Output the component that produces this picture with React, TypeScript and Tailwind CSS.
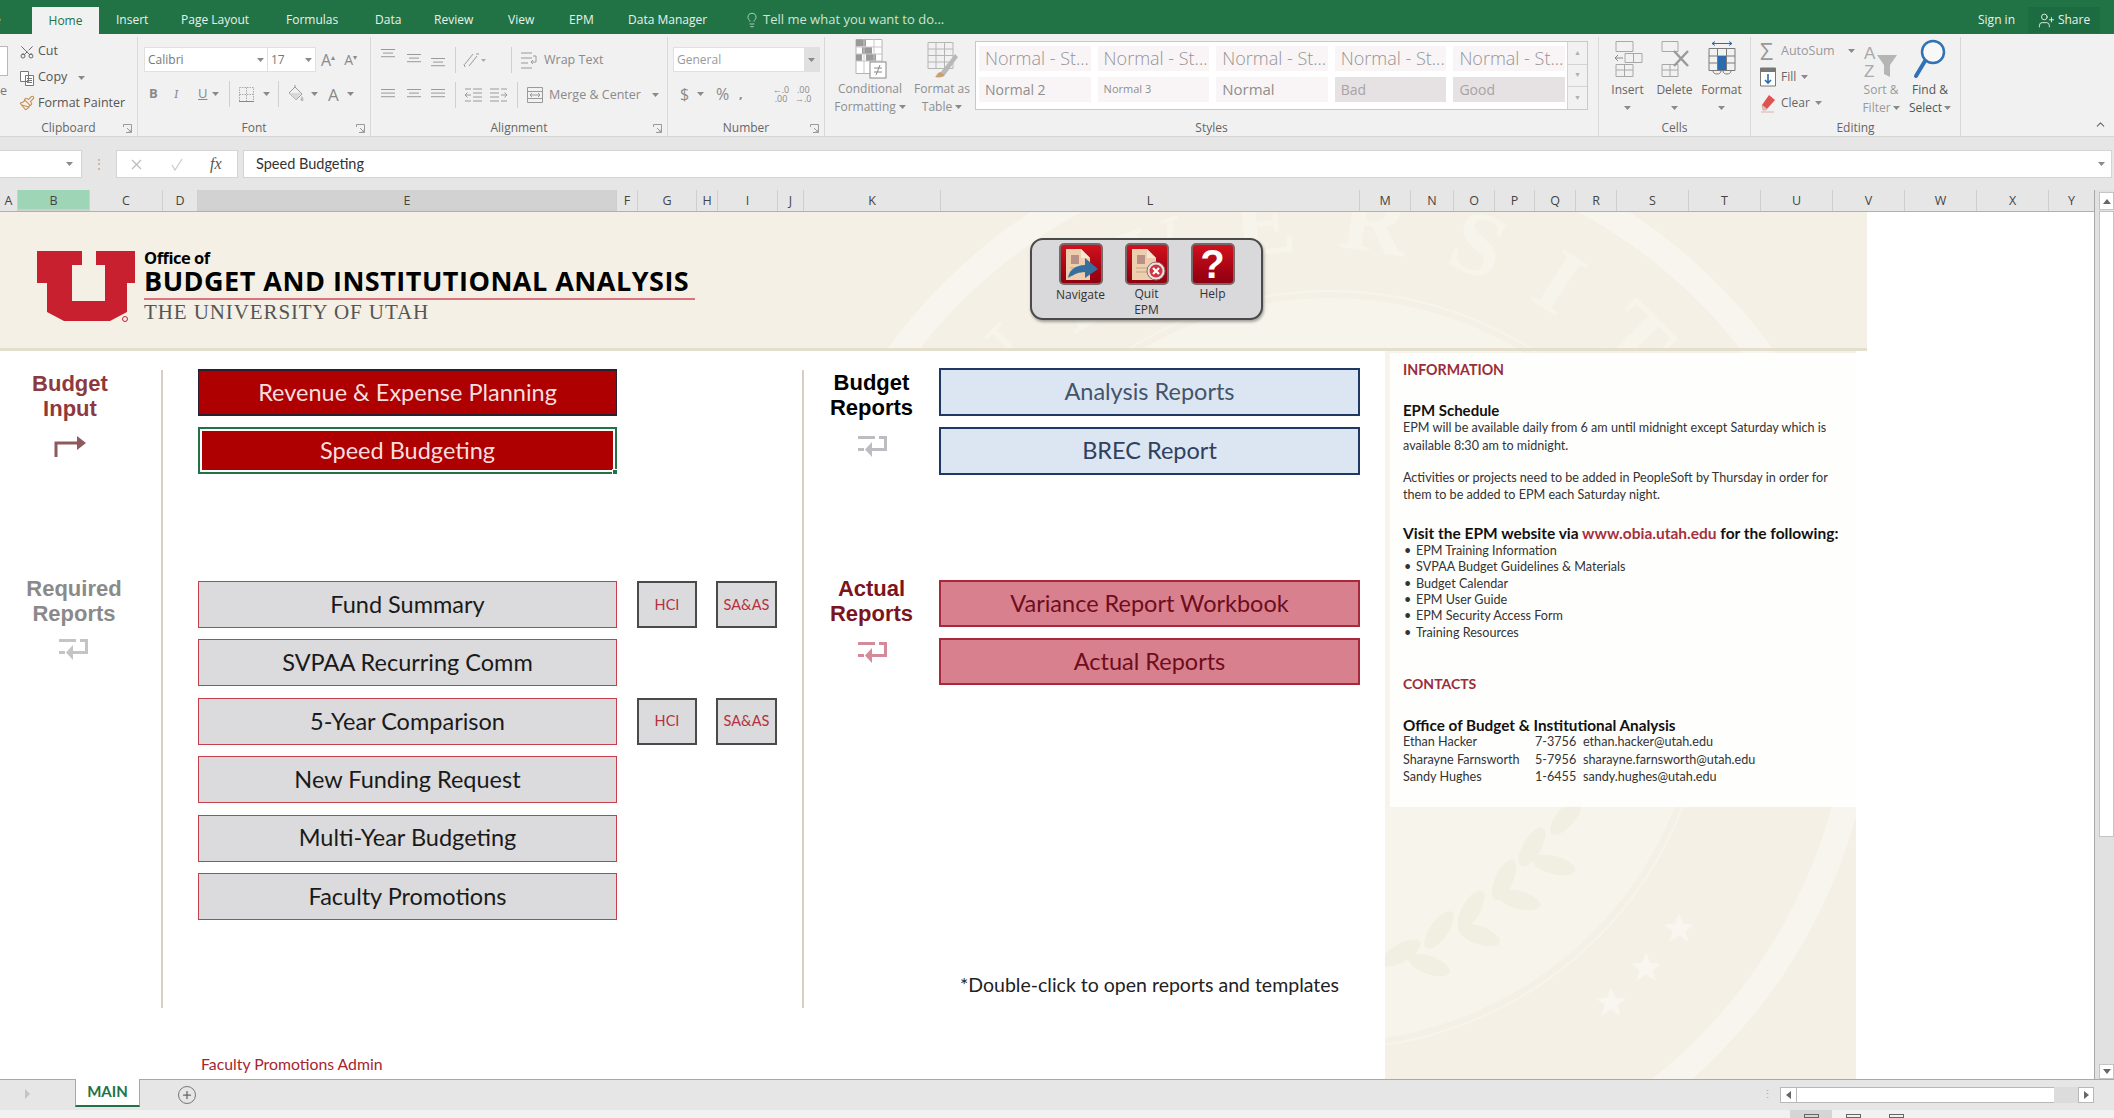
import React from "react";
import { ChevronUp, Lightbulb, Paintbrush, Plus, Scissors, UserPlus } from "lucide-react";

const calibri = "font-['Lato',sans-serif]";

// column letters along the top of the sheet
const columns = [
  { id: "A", w: "w-[18px]" },
  { id: "B", w: "w-[72px]", cls: "bg-[#9fd5b7] border-b-2 border-[#217346]" },
  { id: "C", w: "w-[73px]" },
  { id: "D", w: "w-[35px]" },
  { id: "E", w: "w-[419px]", cls: "bg-[#d2d2d2] border-b-2 border-[#217346]" },
  { id: "F", w: "w-[21px]" },
  { id: "G", w: "w-[59px]" },
  { id: "H", w: "w-[21px]" },
  { id: "I", w: "w-[60px]" },
  { id: "J", w: "w-[26px]" },
  { id: "K", w: "w-[137px]" },
  { id: "L", w: "w-[419px]" },
  { id: "M", w: "w-[51px]" },
  { id: "N", w: "w-[43px]" },
  { id: "O", w: "w-[41px]" },
  { id: "P", w: "w-[40px]" },
  { id: "Q", w: "w-[41px]" },
  { id: "R", w: "w-[41px]" },
  { id: "S", w: "w-[72px]" },
  { id: "T", w: "w-[72px]" },
  { id: "U", w: "w-[72px]" },
  { id: "V", w: "w-[72px]" },
  { id: "W", w: "w-[72px]" },
  { id: "X", w: "w-[72px]" },
  { id: "Y", w: "w-[46px]" },
];

const tabs = [
  { label: "Insert", w: "w-[65px]" },
  { label: "Page Layout", w: "w-[105px]" },
  { label: "Formulas", w: "w-[89px]" },
  { label: "Data", w: "w-[59px]" },
  { label: "Review", w: "w-[74px]" },
  { label: "View", w: "w-[61px]" },
  { label: "EPM", w: "w-[59px]" },
  { label: "Data Manager", w: "w-[116px]" },
];

const requiredReports = [
  { label: "Fund Summary", extras: true },
  { label: "SVPAA Recurring Comm" },
  { label: "5-Year Comparison", extras: true },
  { label: "New Funding Request" },
  { label: "Multi-Year Budgeting" },
  { label: "Faculty Promotions" },
];

const epmLinks = [
  "EPM Training Information",
  "SVPAA Budget Guidelines & Materials",
  "Budget Calendar",
  "EPM User Guide",
  "EPM Security Access Form",
  "Training Resources",
];

const contacts = [
  { name: "Ethan Hacker", phone: "7-3756", email: "ethan.hacker@utah.edu" },
  { name: "Sharayne Farnsworth", phone: "5-7956", email: "sharayne.farnsworth@utah.edu" },
  { name: "Sandy Hughes", phone: "1-6455", email: "sandy.hughes@utah.edu" },
];

const Caret = ({ className = "" }: { className?: string }) => (
  <svg width="7" height="4" viewBox="0 0 7 4" className={`shrink-0 ${className}`}>
    <path d="M0 0h7L3.5 4z" fill="#8a8a8a" />
  </svg>
);

const Lines = ({ widths, className = "" }: { widths: number[]; className?: string }) => (
  <svg width="16" height="16" viewBox="0 0 16 16" className={className}>
    {widths.map((w, i) => (
      <rect key={i} x={(16 - w) / 2} y={2 + i * 3.6} width={w} height="1" fill="#9a9a9a" />
    ))}
  </svg>
);

const VSep = () => <div className="w-px h-[26px] bg-[#d0d0d0] shrink-0" />;

const Group = ({
  label,
  w,
  launcher,
  children,
}: {
  label: string;
  w: string;
  launcher?: boolean;
  children: React.ReactNode;
}) => (
  <div className={`${w} h-[99px] mt-[3px] shrink-0 flex flex-col border-r border-[#d8d8d8]`}>
    <div className="flex-1 min-h-0">{children}</div>
    <div className="h-[20px] pt-[3px] flex items-center relative text-[12px] text-[#666]">
      <span className="flex-1 text-center">{label}</span>
      {launcher && (
        <svg width="9" height="9" viewBox="0 0 9 9" className="absolute right-[5px] top-[8px]">
          <path d="M.5 3V.5H8.500V8.500H3M4 4l4 4M8 5.500V8H5.500" fill="none" stroke="#9a9a9a" />
        </svg>
      )}
    </div>
  </div>
);

const CellsIcon = ({ kind }: { kind: "insert" | "delete" | "format" }) => (
  <svg width="34" height="38" viewBox="0 0 34 38">
    {kind === "format" ? (
      <g fill="none" stroke="#7a7a7a">
        <path d="M4 8.500h26v22H4zM4 16h26M4 23h26M12.500 8.500v22M21.500 8.500v22" />
        <rect x="13" y="16" width="8" height="14" fill="#2b6cb0" stroke="none" />
        <path d="M8 31c0 4 8 4 8 0M18 31c0 4 8 4 8 0" />
        <path d="M7 3.500h20M7 3.500l3-2M7 3.500l3 2M27 3.500l-3-2M27 3.500l-3 2" stroke="#2b6cb0" />
      </g>
    ) : kind === "insert" ? (
      <g fill="none" stroke="#a8a8a8">
        <path d="M5 1.500h17v10H5zM5 24.500h17v12H5zM13.500 24.500v12M5 30h17M14 13.500h17v9H14zM22.500 13.500v9" />
        <path d="M4 18h8M4 18l3-3M4 18l3 3" stroke="#8a8a8a" />
      </g>
    ) : (
      <g fill="none" stroke="#a8a8a8">
        <path d="M4 1.500h16v10H4zM4 24.500h16v12H4zM12 24.500v12M4 30h16" />
        <path d="M16 11l14 15M30 11L16 26" stroke="#9a9a9a" strokeWidth="2.500" />
      </g>
    )}
  </svg>
);

const StyleCell = ({ text, cls }: { text: string; cls: string }) => (
  <div className={`h-[25px] flex items-center pl-[6px] overflow-hidden whitespace-nowrap ${cls}`}>{text}</div>
);

function Ribbon() {
  return (
    <div className="h-[103px] bg-[#f1f1f1] flex border-b border-[#d6d6d6] shrink-0 relative">
      <Group label="Clipboard" w="w-[138px]" launcher>
        <div className="flex h-full text-[12.500px] text-[#555]">
          <div className="w-[19px] relative overflow-hidden">
            <div className="w-[8px] h-[30px] mt-[9px] border border-l-0 border-[#b8b8b8] bg-white" />
            <span className="block mt-[6px] text-[#777]">e</span>
          </div>
          <div className="flex flex-col pt-[2px]">
            <div className="h-[26px] flex items-center gap-[3px]">
              <Scissors size={16} strokeWidth={1.3} className="text-[#555] -rotate-90" />
              <span>Cut</span>
            </div>
            <div className="h-[27px] flex items-center gap-[3px]">
              <svg width="16" height="16" viewBox="0 0 16 16" fill="#fff" stroke="#777">
                <path d="M1.500 1.500h8v10h-8zM6.500 5.500h8v10h-8zM8 8.500h5M8 10.500h5M8 12.500h5" />
              </svg>
              <span>Copy</span>
              <Caret className="ml-[8px]" />
            </div>
            <div className="h-[26px] flex items-center gap-[3px]">
              <Paintbrush size={16} strokeWidth={1.6} className="text-[#c98f4b]" />
              <span>Format Painter</span>
            </div>
          </div>
        </div>
      </Group>

      <Group label="Font" w="w-[233px]" launcher>
        <div className="pl-[6px] pt-[10px] text-[12px] text-[#8a8a8a]">
          <div className="flex items-center">
            <div className="w-[124px] h-[25px] bg-white border border-[#e0e0e0] flex items-center justify-between px-[3px] text-[#777]">
              Calibri <Caret />
            </div>
            <div className="w-[48px] h-[25px] bg-white border border-l-0 border-[#e0e0e0] flex items-center justify-between px-[3px] text-[#777]">
              17 <Caret />
            </div>
            <span className="ml-[5px] text-[16px] leading-none">A</span>
            <span className="text-[8px] self-start mt-[4px]">▴</span>
            <span className="ml-[9px] text-[14px] leading-none">A</span>
            <span className="text-[8px] self-start mt-[4px]">▾</span>
          </div>
          <div className="flex items-center h-[26px] mt-[9px] pl-[5px]">
            <b className="w-[25px] text-[13px]">B</b>
            <i className="w-[24px] text-[13px] font-serif">I</i>
            <u className="w-[14px] text-[13px]">U</u>
            <Caret className="mr-[10px]" />
            <VSep />
            <svg width="17" height="17" viewBox="0 0 17 17" className="ml-[8px]">
              <path d="M1.500 1.500h14v14h-14zM8.500 1.500v14M1.500 8.500h14" fill="none" stroke="#aaa" strokeDasharray="1.500 1" />
              <path d="M1 15.500h15" stroke="#888" />
            </svg>
            <Caret className="ml-[8px] mr-[8px]" />
            <VSep />
            <svg width="18" height="19" viewBox="0 0 18 19" className="ml-[8px]">
              <path d="M8 2l7 7-6 6-7-7zM8 2V0" fill="none" stroke="#999" />
              <path d="M2 8h12l-5 7z" fill="#d8d8d8" />
              <path d="M15 11c2 3 2 5 0 5s-2-2 0-5z" fill="#bbb" />
            </svg>
            <Caret className="ml-[6px] mr-[10px]" />
            <span className="text-[17px] leading-none">A</span>
            <Caret className="ml-[8px]" />
          </div>
        </div>
      </Group>

      <Group label="Alignment" w="w-[297px]" launcher>
        <div className="pl-[9px] pt-[8px] text-[12.500px] text-[#8a8a8a]">
          <div className="flex items-center h-[30px]">
            <Lines widths={[14, 10, 14]} className="mr-[10px] -mt-[10px]" />
            <Lines widths={[14, 10, 14]} className="mr-[8px]" />
            <Lines widths={[14, 10, 14]} className="mr-[9px] mt-[8px]" />
            <VSep />
            <svg width="24" height="18" viewBox="0 0 24 18" className="ml-[6px] mr-[25px]">
              <path d="M3 13L11 3M7 15l8-10M3 16l-1-3M17 3l-3 0" fill="none" stroke="#999" />
              <path d="M19 8h5l-2.500 3z" fill="#aaa" />
            </svg>
            <VSep />
            <svg width="18" height="20" viewBox="0 0 18 20" className="ml-[8px] mr-[6px]" fill="none" stroke="#9a9a9a">
              <path d="M1 3h11M1 8h11M1 13h7M1 18h11M13 6h3v6h-5M13 10l-2 2 2 2" />
            </svg>
            <span>Wrap Text</span>
          </div>
          <div className="flex items-center h-[26px] mt-[7px]">
            <Lines widths={[14, 14, 14]} className="mr-[10px]" />
            <Lines widths={[14, 10, 14]} className="mr-[8px]" />
            <Lines widths={[14, 14, 14]} className="mr-[9px]" />
            <VSep />
            <svg width="44" height="16" viewBox="0 0 44 16" className="ml-[8px] mr-[9px]" fill="none" stroke="#9a9a9a">
              <path d="M9 2h9M9 6h9M9 10h9M9 14h9M1 2h6M1 14h6M7 8H1M3.500 5.500L1 8l2.500 2.500M26 2h9M26 6h9M26 10h9M26 14h9M37 2h6M37 14h6M37 8h6M40.500 5.500L43 8l-2.500 2.500" />
            </svg>
            <VSep />
            <svg width="18" height="18" viewBox="0 0 18 18" className="ml-[8px] mr-[5px]" fill="none" stroke="#9a9a9a">
              <path d="M1.500 1.500h15v15h-15zM1.500 5.500h15M1.500 12.500h15M4 9h10M4 9l2-2M4 9l2 2M14 9l-2-2M14 9l-2 2" />
            </svg>
            <span>Merge &amp; Center</span>
            <Caret className="ml-[11px]" />
          </div>
        </div>
      </Group>

      <Group label="Number" w="w-[157px]" launcher>
        <div className="pl-[5px] pt-[10px] text-[12px] text-[#8a8a8a]">
          <div className="w-[147px] h-[25px] bg-white border border-[#e0e0e0] flex items-center justify-between">
            <span className="pl-[3px] text-[#999]">General</span>
            <div className="h-full w-[15px] bg-[#e0e0e0] flex items-center justify-center">
              <Caret />
            </div>
          </div>
          <div className="flex items-center h-[26px] mt-[9px] pl-[7px]">
            <span className="text-[16px] w-[17px]">$</span>
            <Caret className="mr-[12px]" />
            <span className="text-[16px] w-[23px]">%</span>
            <b className="w-[28px] text-[13px]">,</b>
            <span className="text-[9px] leading-[9px] w-[28px] text-center">
              ←.0
              <br />
              .00
            </span>
            <span className="text-[9px] leading-[9px] text-center">
              .00
              <br />
              →.0
            </span>
          </div>
        </div>
      </Group>

      <Group label="Styles" w="w-[774px]">
        <div className="flex pt-[1px] text-[12px] text-[#8e8e8e]">
          <div className="w-[88px] flex flex-col items-center pl-[2px] leading-[18px]">
            <svg width="36" height="42" viewBox="0 0 36 42">
              <path d="M4 1.500h26v34H4z" fill="#fff" stroke="#b5b5b5" />
              <path d="M4 1.500h10v7H4zM10 9h10v7H10zM4 16h6v7H4zM14 16h10v7H14z" fill="#9a9a9a" />
              <path d="M4 9h26M4 16h26M4 23h26M12 1v34M22 1v34" stroke="#c8c8c8" fill="none" />
              <rect x="18" y="24" width="16" height="16" fill="#fff" stroke="#888" />
              <path d="M22 30h8M22 34h8M28 27l-4 10" stroke="#888" />
            </svg>
            <span>Conditional</span>
            <span className="flex items-center gap-[3px]">
              Formatting <Caret />
            </span>
          </div>
          <div className="w-[64px] flex flex-col items-center -ml-[3px] leading-[18px] shrink-0">
            <svg width="36" height="42" viewBox="0 0 36 42">
              <path d="M4 4.500h25v26H4zM4 11h25M4 17.500h25M4 24h25M12 4.500v26M20.500 4.500v26" fill="none" stroke="#b5b5b5" />
              <path d="M31 16L17 34l4 3 13-18z" fill="#b8b8b8" />
              <path d="M17 34c-4 0-4 4-6 5 4 1 9 0 10-2z" fill="#c9a170" />
            </svg>
            <span className="whitespace-nowrap">Format as</span>
            <span className="flex items-center gap-[3px]">
              Table <Caret />
            </span>
          </div>
          <div className="ml-[1px] mt-[3px] w-[613px] h-[69px] bg-white border border-[#c8c8c8] flex shrink-0">
            <div className="flex-1 grid grid-cols-5 gap-x-[7px] gap-y-[6px] pl-[3px] pr-[2px] pt-[4px] content-start">
              {[0, 1, 2, 3, 4].map((i) => (
                <StyleCell key={i} text="Normal - St..." cls="bg-[#f9f5f6] text-[18px] font-light text-[#949494]" />
              ))}
              <StyleCell text="Normal 2" cls="bg-[#f9f5f6] text-[14px]" />
              <StyleCell text="Normal 3" cls="bg-[#f9f5f6] text-[11px]" />
              <StyleCell text="Normal" cls="bg-[#f9f5f6] text-[15px]" />
              <StyleCell text="Bad" cls="bg-[#e6e1e3] text-[14px] text-[#a8a3a5]" />
              <StyleCell text="Good" cls="bg-[#e6e1e3] text-[14px] text-[#a8a3a5]" />
            </div>
            <div className="w-[20px] bg-[#f1f1f1] border-l border-[#d4d4d4] flex flex-col text-[7px] text-[#b0b0b0] items-center">
              <span className="flex-1 flex items-center">▲</span>
              <span className="flex-1 flex items-center border-y border-[#d4d4d4] w-full justify-center">▼</span>
              <span className="flex-1 flex items-center">▼</span>
            </div>
          </div>
        </div>
      </Group>

      <Group label="Cells" w="w-[152px]">
        <div className="flex justify-center pt-[3px] text-[12px] text-[#666] leading-[18px]">
          {(["Insert", "Delete", "Format"] as const).map((c) => (
            <div key={c} className="w-[47px] flex flex-col items-center">
              <CellsIcon kind={c.toLowerCase() as "insert" | "delete" | "format"} />
              <span className="mt-[3px]">{c}</span>
              <Caret className="mt-[7px]" />
            </div>
          ))}
        </div>
      </Group>

      <Group label="Editing" w="w-[210px]">
        <div className="flex text-[12px] leading-[18px]">
          <div className="w-[105px] pl-[9px] pt-[1px] flex flex-col text-[#666]">
            <div className="h-[26px] flex items-center gap-[3px] text-[#999]">
              <span className="text-[23px] w-[18px] leading-none">Σ</span>
              <span className="text-[12.500px]">AutoSum</span>
              <Caret className="ml-[10px]" />
            </div>
            <div className="h-[26px] flex items-center gap-[5px]">
              <svg width="16" height="20" viewBox="0 0 16 20">
                <path d="M.5 1h15v18H.5z" fill="#fff" stroke="#777" />
                <path d="M.5 1h15v4H.5z" fill="#777" />
                <path d="M8 7v9M5 13l3 3 3-3" stroke="#2b6cb0" strokeWidth="1.600" fill="none" />
              </svg>
              <span>Fill</span>
              <Caret />
            </div>
            <div className="h-[26px] flex items-center gap-[5px]">
              <svg width="16" height="20" viewBox="0 0 16 20">
                <path d="M9 2l6 5-8 9-5-4z" fill="#e0524f" />
                <path d="M2 12l5 4-1 1H3zM1 19h13" fill="#e8c6c6" stroke="#c88" strokeWidth=".6" />
              </svg>
              <span>Clear</span>
              <Caret />
            </div>
          </div>
          <div className="w-[50px] flex flex-col items-center pt-[6px] text-[#999]">
            <svg width="36" height="38" viewBox="0 0 36 38" className="-ml-[2px]">
              <text x="2" y="16" fontSize="17" fill="#aaa" fontFamily="Liberation Sans">A</text>
              <text x="2" y="34" fontSize="17" fill="#aaa" fontFamily="Liberation Sans">Z</text>
              <path d="M15 12h20l-7 10v12l-6-3v-9z" fill="#b5b5b5" />
            </svg>
            <span className="whitespace-nowrap">Sort &amp;</span>
            <span className="flex items-center gap-[2px]">
              Filter <Caret />
            </span>
          </div>
          <div className="w-[48px] flex flex-col items-center text-[#555]">
            <svg width="34" height="44" viewBox="0 0 34 44">
              <circle cx="20" cy="15" r="11" fill="#fff" fillOpacity=".5" stroke="#2f72b5" strokeWidth="2.500" />
              <path d="M12 24L3 39" stroke="#2f72b5" strokeWidth="4" strokeLinecap="round" />
            </svg>
            <span className="whitespace-nowrap">Find &amp;</span>
            <span className="flex items-center gap-[2px]">
              Select <Caret />
            </span>
          </div>
        </div>
      </Group>

      <ChevronUp size={13} strokeWidth={2} className="absolute right-[7px] bottom-[5px] text-[#666]" />
    </div>
  );
}

function FormulaBar() {
  return (
    <div className="h-[53px] bg-[#e6e6e6] flex items-center pt-[1px] shrink-0 text-[#777]">
      <div className="w-[82px] h-[28px] bg-white border border-l-0 border-[#d4d4d4] flex items-center justify-end pr-[8px]">
        <Caret className="text-[#555]" />
      </div>
      <div className="w-[34px] flex justify-center text-[#aaa] text-[12px] tracking-tight">⋮</div>
      <div className="w-[122px] h-[28px] bg-white border border-[#d4d4d4] flex items-center pl-[13px] text-[#bdbdbd]">
        <svg width="13" height="13" viewBox="0 0 13 13" className="mr-[27px]">
          <path d="M2 2l9 9M11 2l-9 9" stroke="#bbb" strokeWidth="1.200" />
        </svg>
        <svg width="14" height="13" viewBox="0 0 14 13" className="mr-[26px]">
          <path d="M2 7l3 5 7-11" stroke="#ccc" strokeWidth="1.300" fill="none" />
        </svg>
        <i className="font-['Liberation_Serif',serif] text-[16px] text-[#555]">fx</i>
      </div>
      <div className="ml-[5px] w-[1869px] h-[28px] bg-white border border-[#d4d4d4] flex items-center justify-between pl-[12px] pr-[6px]">
        <span className={`${calibri} text-[14.500px] text-[#333]`}>Speed Budgeting</span>
        <Caret />
      </div>
    </div>
  );
}

const SealRings = () => (
  <>
    <circle cx="1330" cy="670" r="372" fill="#f7f4ec" />
    <circle cx="1330" cy="670" r="379" fill="none" stroke="#f7f4ec" strokeWidth="2" />
    <circle cx="1330" cy="670" r="534" fill="none" stroke="#f8f5ee" strokeWidth="26" />
  </>
);

const Star = ({ x, y }: { x: number; y: number }) => (
  <path
    transform={`translate(${x} ${y}) scale(1.050)`}
    d="M0-14l4 10 10 1-8 6 3 10-9-6-9 6 3-10-8-6 10-1z"
    fill="#f9f6f0"
  />
);

const Leaf = ({ x, y, r }: { x: number; y: number; r: number }) => (
  <ellipse cx={x} cy={y} rx="22" ry="9" transform={`rotate(${r} ${x} ${y})`} fill="#f1eee2" />
);

function Logo() {
  return (
    <div className="flex items-start pl-[37px] pt-[39px] relative">
      <svg width="104" height="72" viewBox="37 251 104 72" className="shrink-0">
        <path
          d="M37 251H82V265H72V301H105V265H96V251H135V283H127V312L110 321H64L47 312V283H37Z"
          fill="#c8202f"
        />
        <circle cx="125" cy="319" r="2.500" fill="none" stroke="#c8202f" />
      </svg>
      <div className="ml-[3px] -mt-[2px]">
        <div className="h-[18px] leading-[18px] text-[16.500px] font-bold text-black font-['Open_Sans',sans-serif] tracking-[-0.5px]">
          Office of
        </div>
        <div className="h-[28px] leading-[28px] text-[27px] font-bold text-black font-['Open_Sans',sans-serif] tracking-[0.5px] whitespace-nowrap">
          BUDGET AND INSTITUTIONAL ANALYSIS
        </div>
        <div className="mt-[3px] w-[551px] h-[2px] bg-[#d9747c]" />
        <div className="mt-[2px] h-[20px] leading-[20px] text-[21px] tracking-[0.9px] text-[#555] font-['Liberation_Serif',serif] whitespace-nowrap">
          THE UNIVERSITY OF UTAH
        </div>
      </div>
    </div>
  );
}

const ToolIcon = ({ children }: { children: React.ReactNode }) => (
  <div className="w-[44px] h-[42px] rounded-[5px] border-2 border-[#77696a] bg-gradient-to-b from-[#d2101c] to-[#8f0010] flex items-center justify-center overflow-hidden">
    {children}
  </div>
);

const DocGlyph = () => (
  <>
    <path d="M4 3h15l9 9v22H4z" fill="#edcfb0" />
    <path d="M19 3l9 9h-9z" fill="#f7e6d3" />
    <rect x="9" y="9" width="8" height="9" fill="#b98f86" />
    <path d="M8 22h14M8 26h16" stroke="#c9a182" />
  </>
);

function Toolbar() {
  return (
    <div className="relative mt-[26px] w-[233px] h-[82px] rounded-[13px] bg-[#d9d8da] border-2 border-[#4a4a4a] shadow-[1px_2px_3px_rgba(0,0,0,0.35)] flex justify-center gap-[22px] pt-[3px] text-[12px] text-[#333]">
      <div className="w-[44px] flex flex-col items-center">
        <ToolIcon>
          <svg width="38" height="36" viewBox="0 0 38 36">
            <DocGlyph />
            <path d="M6 32c1-8 8-13 17-13v-7l13 11-13 9v-6c-6 0-10 2-17 6z" fill="#356f9f" />
          </svg>
        </ToolIcon>
        <span className="mt-[1px] whitespace-nowrap leading-[18px]">Navigate</span>
      </div>
      <div className="w-[44px] flex flex-col items-center">
        <ToolIcon>
          <svg width="38" height="36" viewBox="0 0 38 36">
            <DocGlyph />
            <circle cx="28" cy="25" r="9" fill="#e9e4e4" stroke="#8a6a6a" />
            <circle cx="28" cy="25" r="6.500" fill="#d2333f" />
            <path d="M25 22l6 6M31 22l-6 6" stroke="#fff" strokeWidth="2.200" />
          </svg>
        </ToolIcon>
        <span className="leading-[17px]">Quit</span>
        <span className="leading-[15px]">EPM</span>
      </div>
      <div className="w-[44px] flex flex-col items-center">
        <ToolIcon>
          <span className="font-['Liberation_Sans',sans-serif] font-bold text-[40px] leading-none text-white">?</span>
        </ToolIcon>
        <span className="leading-[17px]">Help</span>
      </div>
    </div>
  );
}

function Banner() {
  return (
    <div className="relative w-[1867px] h-[139px] bg-[#f4f0e5] border-b-[3px] border-[#e4dfcd] shrink-0 overflow-hidden">
      <svg viewBox="0 212 1867 139" width="1867" height="139" className="absolute left-0 top-0" aria-hidden="true">
        <SealRings />
        <path id="seal-arc" d="M910 670A420 420 0 0 1 1750 670" fill="none" />
        <text fontSize="92" fontFamily="Liberation Serif" fontWeight="700" fill="#f7f4eb" letterSpacing="40">
          <textPath href="#seal-arc" startOffset="50%" textAnchor="middle">
            UNIVERSITY
          </textPath>
        </text>
      </svg>
      <div className="relative flex items-start">
        <div className="w-[1030px] shrink-0">
          <Logo />
        </div>
        <Toolbar />
      </div>
    </div>
  );
}

const BentArrow = () => (
  <svg width="32" height="21" viewBox="0 0 32 21" className="mx-auto">
    <path d="M2 21V7h23" fill="none" stroke="#8d5a5e" strokeWidth="3" />
    <path d="M23 0l9 7-9 7z" fill="#8d5a5e" />
  </svg>
);

const ReturnArrow = ({ color }: { color: string }) => (
  <svg width="30" height="22" viewBox="0 0 30 22" className="mx-auto">
    <g fill={color}>
      <rect x="0" y="1" width="17" height="3" />
      <rect x="21" y="1" width="8" height="3" />
      <rect x="26" y="1" width="3" height="15" />
      <rect x="12" y="13" width="17" height="3" />
      <rect x="0" y="13" width="6" height="3" />
      <path d="M14 7v15l-7-7.500z" />
    </g>
  </svg>
);

const RowLabel = ({ lines, cls }: { lines: string[]; cls: string }) => (
  <div className={`font-['Liberation_Sans',sans-serif] font-bold text-[22px] leading-[25px] text-center ${cls}`}>
    {lines.map((l) => (
      <div key={l}>{l}</div>
    ))}
  </div>
);

function Sheet() {
  const btn = `${calibri} flex items-center justify-center text-[23.500px]`;
  const small = `${calibri} w-[60px] h-[47px] bg-[#dbdadc] border-2 border-[#4a4a4a] flex items-center justify-center text-[14.500px] text-[#b53040]`;
  return (
    <div className="flex-1 min-h-0 flex">
      {/* left labels */}
      <div className="w-[161px] shrink-0 pt-[20px]">
        <div className="w-[140px]">
          <RowLabel lines={["Budget", "Input"]} cls="text-[#8d3a3e]" />
          <div className="mt-[15px]">
            <BentArrow />
          </div>
        </div>
        <div className="w-[148px] mt-[119px]">
          <RowLabel lines={["Required", "Reports"]} cls="text-[#8a8a8a]" />
          <div className="mt-[12px]">
            <ReturnArrow color="#c4c4c4" />
          </div>
        </div>
      </div>

      <div className="w-[2px] h-[638px] mt-[19px] bg-[#d8cfc3] shrink-0" />

      {/* input and required report buttons */}
      <div className="w-[639px] shrink-0 pl-[35px] pt-[18px]">
        <div className="flex flex-col gap-[11px] w-[419px]">
          <div className={`${btn} h-[47px] bg-[#ae0000] border-y-2 border-x border-[#2a2030] text-[#f7dede]`}>
            Revenue &amp; Expense Planning
          </div>
          <div className="relative h-[47px] border-2 border-[#217346] p-[2px]">
            <div className={`${btn} h-[39px] bg-[#ae0000] text-[#f7dede]`}>Speed Budgeting</div>
            <div className="absolute -right-[3px] -bottom-[3px] w-[6px] h-[6px] bg-[#217346] border border-white" />
          </div>
        </div>
        <div className="mt-[107px] flex flex-col gap-[11.400px]">
          {requiredReports.map((r) => (
            <div key={r.label} className="flex">
              <div className={`${btn} h-[47px] w-[419px] bg-[#dbdadc] border-[1.500px] border-[#c4404c] text-[#1a1a1a]`}>{r.label}</div>
              {r.extras && (
                <>
                  <div className={`${small} ml-[20px]`}>HCI</div>
                  <div className={`${small} ml-[19px] !w-[61px]`}>SA&amp;AS</div>
                </>
              )}
            </div>
          ))}
        </div>
        <div className={`${calibri} mt-[134px] ml-[3px] text-[15.800px] leading-[20px] text-[#a8252e]`}>Faculty Promotions Admin</div>
      </div>

      <div className="w-[2px] h-[638px] mt-[19px] bg-[#d8cfc3] shrink-0" />

      {/* report labels */}
      <div className="w-[135px] shrink-0 pt-[19px]">
        <RowLabel lines={["Budget", "Reports"]} cls="text-black" />
        <div className="mt-[15px] pl-[2px]">
          <ReturnArrow color="#bcbcc2" />
        </div>
        <div className="mt-[119px]">
          <RowLabel lines={["Actual", "Reports"]} cls="text-[#7c1420]" />
          <div className="mt-[15px] pl-[2px]">
            <ReturnArrow color="#d48a98" />
          </div>
        </div>
      </div>

      {/* report buttons */}
      <div className="w-[421px] shrink-0 pt-[17px]">
        <div className="flex flex-col gap-[11px]">
          <div className={`${btn} h-[48px] bg-[#dce6f2] border-[2.500px] border-[#1f3864] text-[#44546a]`}>Analysis Reports</div>
          <div className={`${btn} h-[48px] bg-[#dce6f2] border-[2.500px] border-[#1f3864] text-[#2f4060]`}>BREC Report</div>
        </div>
        <div className="mt-[105px] flex flex-col gap-[11px]">
          <div className={`${btn} h-[47px] bg-[#d8808e] border-2 border-[#a62a3c] text-[#6e0d1c]`}>Variance Report Workbook</div>
          <div className={`${btn} h-[47px] bg-[#d8808e] border-2 border-[#a62a3c] text-[#6e0d1c]`}>Actual Reports</div>
        </div>
        <div className={`${calibri} mt-[288px] text-center text-[19.500px] leading-[24px] text-[#222] whitespace-nowrap`}>
          *Double-click to open reports and templates
        </div>
      </div>

      <div className="w-[25px] shrink-0" />

      {/* information panel */}
      <div className="relative w-[471px] shrink-0 bg-[#f4f0e5] overflow-hidden">
        <svg viewBox="1386 351 471 728" width="471" height="728" className="absolute left-0 top-0" aria-hidden="true">
          <SealRings />
          <Leaf x={1402} y={953} r={-30} />
          <Leaf x={1440} y={930} r={-55} />
          <Leaf x={1472} y={910} r={-60} />
          <Leaf x={1505} y={880} r={-65} />
          <Leaf x={1533} y={847} r={-60} />
          <Leaf x={1567} y={817} r={-50} />
          <Leaf x={1430} y={965} r={20} />
          <Leaf x={1480} y={935} r={20} />
          <Leaf x={1520} y={900} r={15} />
          <Leaf x={1555} y={865} r={15} />
          <Star x={1680} y={928} />
          <Star x={1647} y={967} />
          <Star x={1612} y={1002} />
        </svg>
        <div className={`relative ml-[5px] mt-[2px] w-[466px] h-[454px] bg-white/90 pl-[13px] pt-[9px] text-[12.600px] leading-[16.400px] text-[#333] ${calibri}`}>
          <div className="text-[14.200px] font-bold text-[#9b2c3a]">INFORMATION</div>
          <div className="mt-[24px] text-[15px] font-bold text-[#111]">EPM Schedule</div>
          <div className="mt-[1.500px]">EPM will be available daily from 6 am until midnight except Saturday which is</div>
          <div className="mt-[1.200px]">available 8:30 am to midnight.</div>
          <div className="mt-[16px]">Activities or projects need to be added in PeopleSoft by Thursday in order for</div>
          <div>them to be added to EPM each Saturday night.</div>
          <div className="mt-[22px] text-[15.500px] font-bold text-[#111] whitespace-nowrap">
            Visit the EPM website via <span className="text-[#a5313c]">www.obia.utah.edu</span> for the following:
          </div>
          <div className="mt-[1.300px]">
            {epmLinks.map((l) => (
              <div key={l} className="flex pl-[1px]">
                <span className="w-[12px] shrink-0">•</span>
                {l}
              </div>
            ))}
          </div>
          <div className="mt-[35px] text-[14px] font-bold text-[#9b2c3a]">CONTACTS</div>
          <div className="mt-[24px] text-[15.300px] font-bold text-[#111]">Office of Budget &amp; Institutional Analysis</div>
          {contacts.map((c, i) => (
            <div key={c.name} className={i === 2 ? "flex" : "flex mt-[1.400px]"}>
              <span className="w-[132px] shrink-0">{c.name}</span>
              <span className="w-[48px] shrink-0">{c.phone}</span>
              <span>{c.email}</span>
            </div>
          ))}
        </div>
      </div>
    </div>
  );
}

function TabBar() {
  return (
    <div className="h-[31px] bg-[#e6e6e6] border-t border-[#a8a8a8] flex shrink-0 items-start">
      <div className="w-[75px] h-[28px] flex items-center pl-[25px]">
        <svg width="5" height="10" viewBox="0 0 5 10">
          <path d="M0 0l5 5-5 5z" fill="#c4c4c4" />
        </svg>
      </div>
      <div className={`${calibri} w-[65px] h-[28px] -mt-px bg-white border-x border-b-2 border-x-[#a8a8a8] border-b-[#217346] text-center text-[15px] leading-[25px] font-bold text-[#217346]`}>
        MAIN
      </div>
      <div className="ml-[38px] mt-[6px] w-[18px] h-[18px] rounded-full border border-[#777] flex items-center justify-center">
        <Plus size={12} strokeWidth={2.500} className="text-[#666]" />
      </div>
      <div className="flex-1" />
      <div className="mt-[8px] text-[#a8a8a8] text-[11px] leading-[12px] w-[18px]">⋮</div>
      <div className="mt-[7px] w-[314px] h-[16px] flex">
        <div className="w-[17px] bg-white border border-[#b8b8b8] flex items-center justify-center">
          <svg width="5" height="8" viewBox="0 0 5 8">
            <path d="M5 0L0 4l5 4z" fill="#666" />
          </svg>
        </div>
        <div className="w-[257px] bg-white border-y border-[#b8b8b8]" />
        <div className="w-[24px] bg-[#dcdcdc]" />
        <div className="w-[16px] bg-white border border-[#b8b8b8] flex items-center justify-center">
          <svg width="5" height="8" viewBox="0 0 5 8">
            <path d="M0 0l5 4-5 4z" fill="#666" />
          </svg>
        </div>
      </div>
      <div className="w-[20px]" />
    </div>
  );
}

export default function App() {
  return (
    <div className="w-[2114px] h-[1118px] overflow-hidden flex flex-col bg-[#f1f1f1] font-['Open_Sans',sans-serif]">
      {/* title bar with ribbon tabs */}
      <div className="h-[34px] bg-[#217346] flex items-end shrink-0 text-[12px] text-[#e9f2ec]">
        <div className="w-[33px] h-[28px] leading-[27px] -ml-[1px] overflow-hidden">
          <span className="block -ml-[5px] w-[10px]">e</span>
        </div>
        <div className="w-[67px] h-[27px] bg-[#f1f1f1] text-[#217346] text-center leading-[27px]">Home</div>
        <div className="pl-[17px] flex h-[28px] leading-[28px]">
          {tabs.map((t) => (
            <span key={t.label} className={t.w}>
              {t.label}
            </span>
          ))}
        </div>
        <div className="flex items-center h-[28px] text-[13px] text-[#cfe3d7]">
          <Lightbulb size={16} strokeWidth={1.2} className="mr-[3px]" />
          Tell me what you want to do...
        </div>
        <div className="flex-1" />
        <span className="h-[28px] leading-[28px] mr-[13px]">Sign in</span>
        <div className="w-[72px] h-[26px] mb-[1px] mr-[14px] bg-[#1d6b40] flex items-center justify-center gap-[3px]">
          <UserPlus size={17} strokeWidth={1.3} />
          Share
        </div>
      </div>

      <Ribbon />
      <FormulaBar />

      <div className="h-[889px] flex shrink-0 bg-white">
        <div className="w-[2094px] shrink-0 flex flex-col">
          <div className="h-[22px] flex bg-[#e6e6e6] border-b border-[#b0b0b0] text-[12.500px] text-[#444] shrink-0 whitespace-nowrap">
            {columns.map((c) => (
              <div key={c.id} className={`${c.w} ${c.cls ?? ""} shrink-0 text-center leading-[22px] border-r border-[#cfcfcf]`}>
                {c.id}
              </div>
            ))}
          </div>
          <div className="flex-1 flex flex-col min-h-0">
            <Banner />
            <Sheet />
          </div>
        </div>
        <div className="flex-1 bg-[#e1e1e1] flex flex-col items-end border-l border-[#a8a8a8]">
          <div className="w-[15px] h-[18px] mt-[2px] bg-white border border-[#c4c4c4] flex items-center justify-center">
            <svg width="8" height="5" viewBox="0 0 8 5">
              <path d="M4 0l4 5H0z" fill="#666" />
            </svg>
          </div>
          <div className="w-[15px] h-[626px] mt-[1px] bg-white border border-[#c4c4c4]" />
          <div className="flex-1" />
          <div className="w-[15px] h-[15px] bg-white border border-[#c4c4c4] flex items-center justify-center">
            <svg width="8" height="5" viewBox="0 0 8 5">
              <path d="M0 0h8L4 5z" fill="#666" />
            </svg>
          </div>
        </div>
      </div>

      <TabBar />

      <div className="flex-1 flex bg-[#f1f1f1]">
        <div className="ml-[1790px] w-[42px] h-full bg-[#d5d5d5] flex justify-center">
          <div className="w-[15px] h-[4px] mt-[4px] border border-[#666]" />
        </div>
        <div className="ml-[14px] w-[15px] h-[4px] mt-[4px] border border-[#666]" />
        <div className="ml-[28px] w-[15px] h-[4px] mt-[4px] border border-[#666]" />
      </div>
    </div>
  );
}
